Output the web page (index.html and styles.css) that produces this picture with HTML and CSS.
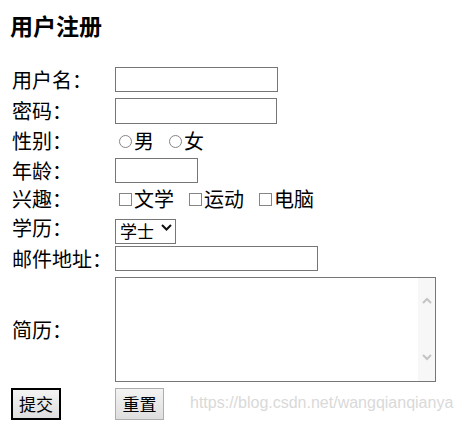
FILE: index.html
```html
<!DOCTYPE html>
<html lang="zh-CN">
<head>
  <meta charset="UTF-8">
  <title>用户注册</title>
  <link rel="stylesheet" href="styles.css">
</head>
<body>
  <h3 class="title">用户注册</h3>
  <form class="reg-form">
    <label class="field-label">用户名：</label>
    <input type="text" class="text-input input-name">

    <label class="field-label">密码：</label>
    <input type="password" class="text-input input-pass">

    <label class="field-label">性别：</label>
    <div class="options">
      <label class="option"><input type="radio" name="sex" class="radio">男</label>
      <label class="option"><input type="radio" name="sex" class="radio">女</label>
    </div>

    <label class="field-label">年龄：</label>
    <input type="text" class="text-input input-age">

    <label class="field-label">兴趣：</label>
    <div class="options">
      <label class="option"><input type="checkbox" class="check">文学</label>
      <label class="option"><input type="checkbox" class="check">运动</label>
      <label class="option"><input type="checkbox" class="check">电脑</label>
    </div>

    <label class="field-label">学历：</label>
    <span class="select-wrap">
      <select class="degree">
        <option>学士</option>
        <option>硕士</option>
        <option>博士</option>
      </select>
      <svg class="chevron" width="11" height="7" viewBox="0 0 11 7"><path d="M1 1 L5.5 5.5 L10 1" fill="none" stroke="#111" stroke-width="2"/></svg>
    </span>

    <label class="field-label">邮件地址：</label>
    <input type="text" class="text-input input-mail">

    <label class="field-label">简历：</label>
    <span class="area-wrap">
      <textarea class="resume"></textarea>
      <span class="scrollbar">
        <svg width="10" height="7" viewBox="0 0 10 7"><path d="M1 6 L5 2 L9 6" fill="none" stroke="#c4c4c4" stroke-width="2"/></svg>
        <svg width="10" height="7" viewBox="0 0 10 7"><path d="M1 1 L5 5 L9 1" fill="none" stroke="#c4c4c4" stroke-width="2"/></svg>
      </span>
    </span>

    <div class="btn-cell"><button type="submit" class="btn btn-submit">提交</button></div>
    <div><button type="reset" class="btn">重置</button></div>
  </form>

  <div class="watermark">https://blog.csdn.net/wangqianqianya</div>
</body>
</html>
```

FILE: styles.css
```css
body {
  margin: 10px;
  font-family: "Noto Sans CJK SC", sans-serif;
  font-size: 20px;
  color: #000;
  background: #fff;
}
.title {
  margin: 1px 0 0;
  font-size: 23px;
  line-height: 28px;
  font-weight: bold;
}
.reg-form {
  margin-top: 28px;
  display: grid;
  grid-template-columns: 105px auto;
  grid-template-rows: 25px 26px 22px 25px 20px 25px 25px 105px 32px;
  row-gap: 6px;
  align-items: center;
  justify-items: start;
}
.field-label {
  padding-left: 2px;
  line-height: 22px;
}
.text-input {
  box-sizing: border-box;
  height: 25px;
  margin: 0;
  padding: 0 3px;
  border: 1px solid #767676;
  font: inherit;
  font-size: 16px;
  outline: none;
}
.input-name { width: 163px; }
.input-pass { width: 162px; height: 26px; }
.input-age { width: 83px; }
.input-mail { width: 203px; }

.options {
  display: flex;
  gap: 11px;
  line-height: 22px;
}
.option {
  display: flex;
  align-items: center;
}
.radio,
.check {
  appearance: none;
  box-sizing: border-box;
  flex: none;
  width: 13px;
  height: 13px;
  margin: 1px 2px 0 4px;
  border: 1px solid #858585;
  background: #fff;
}
.radio {
  border-radius: 50%;
}

.select-wrap {
  position: relative;
  display: inline-block;
  height: 25px;
}
.degree {
  appearance: none;
  box-sizing: border-box;
  width: 61px;
  height: 25px;
  margin: 0;
  padding: 0 0 0 4px;
  border: 1px solid #767676;
  border-radius: 0;
  background: #fff;
  font: inherit;
  font-size: 17px;
  line-height: 22px;
  color: #000;
  outline: none;
}
.chevron {
  position: absolute;
  left: 46px;
  top: 9px;
  pointer-events: none;
}

.area-wrap {
  position: relative;
  display: inline-block;
  height: 105px;
}
.resume {
  display: block;
  box-sizing: border-box;
  width: 321px;
  height: 105px;
  margin: 0;
  padding: 2px 20px 2px 3px;
  border: 1px solid #767676;
  resize: none;
  overflow: hidden;
  font: inherit;
  outline: none;
}
.scrollbar {
  position: absolute;
  top: 1px;
  right: 1px;
  bottom: 1px;
  width: 17px;
  background: #f7f7f7;
  display: flex;
  flex-direction: column;
  align-items: center;
  justify-content: space-between;
  padding: 19px 0 20px;
  box-sizing: border-box;
}

.btn-cell {
  padding-left: 1px;
}
.btn {
  box-sizing: border-box;
  height: 32px;
  width: 49px;
  margin: 0;
  padding: 0;
  border: 1px solid #adadad;
  background: linear-gradient(#f3f3f3, #dedede);
  font: inherit;
  font-size: 17px;
  line-height: 28px;
  color: #000;
}
.btn-submit {
  width: 50px;
  border: 2px solid #000;
}

.watermark {
  position: absolute;
  left: 190px;
  top: 394px;
  font-family: "Liberation Sans", Arial, sans-serif;
  font-size: 16px;
  line-height: 18px;
  color: #d9d9d9;
  pointer-events: none;
}
```
